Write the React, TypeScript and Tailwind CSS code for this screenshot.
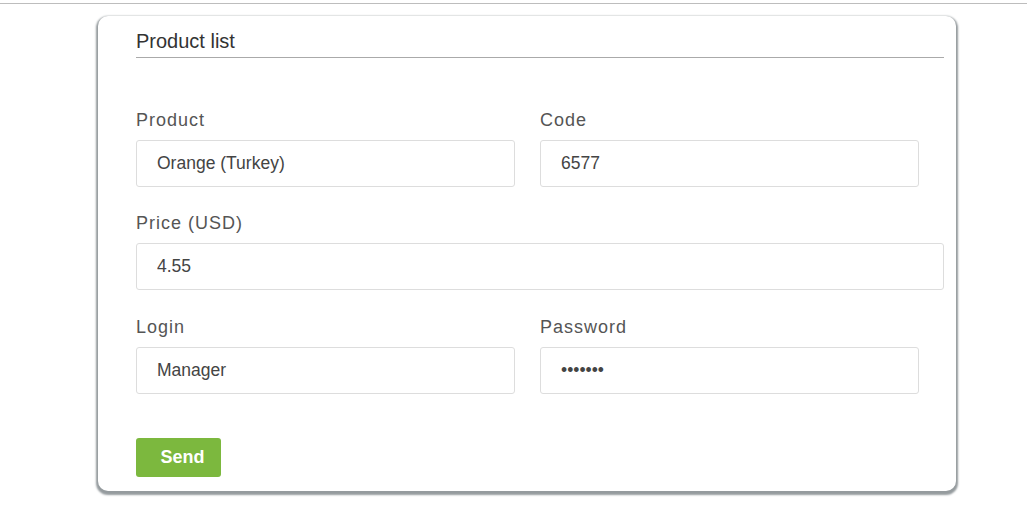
const fields = {
  product: "Orange (Turkey)",
  code: "6577",
  price: "4.55",
  login: "Manager",
  password: "1234567",
};

const Field = ({
  label,
  value,
  type = "text",
  half = true,
}: {
  label: string;
  value: string;
  type?: string;
  half?: boolean;
}) => (
  <div className="flex flex-col">
    <label className="h-[24px] mb-[8px] text-[18px] leading-[24px] tracking-[1px] text-[#555]">
      {label}
    </label>
    <input
      type={type}
      defaultValue={value}
      readOnly
      className={`${
        half ? "w-[379px]" : "w-full"
      } h-[47px] px-[20px] border border-[#ddd] rounded-[3px] bg-white text-[17.5px] text-[#444] outline-none`}
    />
  </div>
);

export default function App() {
  return (
    <div
      className="min-h-screen bg-white"
      style={{ fontFamily: '"Liberation Sans", Arial, sans-serif' }}
    >
      <div className="pt-[3px]">
        <div className="h-px bg-[#bdbdbd]" />
      </div>

      <div className="ml-[98px] mt-[12px] w-[858px] rounded-[10px] bg-white pl-[38px] pr-[12px] pt-[14px] pb-[14px] shadow-[0_2px_2px_2px_#959b9e]">
        {/* title */}
        <h2 className="text-[20px] leading-[23px] text-[#333] pb-[4px] border-b border-[#aaa]">
          Product list
        </h2>

        <form className="mt-[50px] flex flex-col gap-[24px]">
          <div className="grid grid-cols-2">
            <Field label="Product" value={fields.product} />
            <Field label="Code" value={fields.code} />
          </div>

          <Field label="Price (USD)" value={fields.price} half={false} />

          <div className="grid grid-cols-2 mt-[1px]">
            <Field label="Login" value={fields.login} />
            <Field label="Password" value={fields.password} type="password" />
          </div>

          <div className="pt-[20px]">
            <button
              type="button"
              className="w-[85px] h-[39px] pl-[8px] rounded-[3px] bg-[#7cb83e] text-white text-[18px] font-bold"
            >
              Send
            </button>
          </div>
        </form>
      </div>
    </div>
  );
}
